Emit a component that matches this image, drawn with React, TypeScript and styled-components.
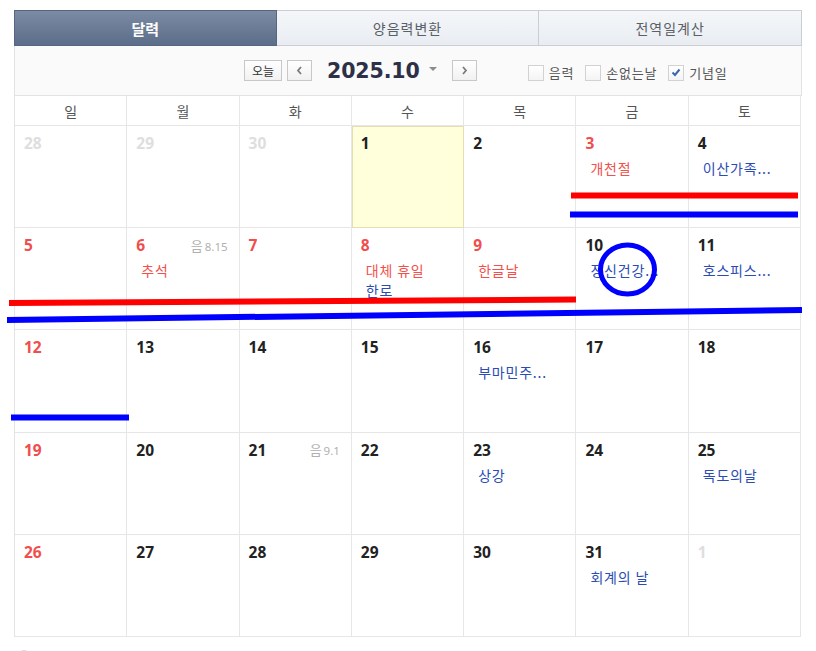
import React from "react";
import styled, { createGlobalStyle, css } from "styled-components";

const GlobalStyle = createGlobalStyle`
  html, body {
    margin: 0;
    padding: 0;
    background: #ffffff;
  }
  body {
    font-family: "Noto Sans CJK KR", "Noto Sans", sans-serif;
    color: #333;
  }
  * { box-sizing: border-box; }
`;

const Root = styled.div`
  position: relative;
  width: 816px;
  height: 651px;
  overflow: hidden;
`;

const Page = styled.div`
  width: 788px;
  margin: 10px 0 0 14px;
`;

/* ---------- tabs ---------- */

const Tabs = styled.div`
  display: grid;
  grid-template-columns: repeat(3, 1fr);
  height: 36px;
`;

const Tab = styled.div<{ $active?: boolean }>`
  display: flex;
  align-items: center;
  justify-content: center;
  font-size: 14px;
  letter-spacing: 1px;
  border: 1px solid #c9ced6;
  border-left-width: 0;
  background: linear-gradient(#f4f6f9, #e9edf2);
  color: #5b5f66;
  &:first-child { border-left-width: 1px; }
  ${(p) =>
    p.$active &&
    css`
      background: linear-gradient(#7b8ba4, #5c6d89);
      border-color: #56667f;
      color: #ffffff;
      font-weight: 700;
      font-size: 15px;
      letter-spacing: 0;
    `}
`;

/* ---------- toolbar ---------- */

const Toolbar = styled.div`
  display: flex;
  align-items: center;
  height: 50px;
  padding: 0 0 0 229px;
  background: #fafafa;
  border: 1px solid #e3e3e3;
  border-top: none;
`;

const NavButton = styled.button<{ $wide?: boolean }>`
  display: flex;
  align-items: center;
  justify-content: center;
  height: 21px;
  width: ${(p) => (p.$wide ? "38px" : "25px")};
  padding: 0;
  margin-right: 5px;
  border: 1px solid #c8c8c8;
  background: linear-gradient(#ffffff, #f1f1f1);
  font-family: "Noto Sans CJK KR", sans-serif;
  font-size: 12px;
  color: #333;
  line-height: 1;
`;

const MonthTitle = styled.div`
  margin-left: 10px;
  font-family: "DejaVu Sans", Verdana, sans-serif;
  font-weight: 700;
  font-size: 20.5px;
  color: #2d3047;
  letter-spacing: -0.1px;
`;

const Caret = styled.span`
  display: inline-block;
  margin: 0 15px 0 9px;
  width: 0;
  height: 0;
  border-left: 4px solid transparent;
  border-right: 4px solid transparent;
  border-top: 4px solid #8c8c8c;
  transform: translateY(-2px);
`;

const Options = styled.div`
  display: flex;
  align-items: center;
  margin-left: 46px;
  margin-top: 4px;
`;

const Option = styled.label`
  display: flex;
  align-items: center;
  margin-right: 11px;
  font-size: 13px;
  letter-spacing: 0.8px;
  color: #555;
`;

const Box = styled.span`
  display: flex;
  align-items: center;
  justify-content: center;
  width: 16px;
  height: 16px;
  margin-right: 5px;
  border: 1px solid #d2d2d2;
  background: linear-gradient(#ffffff, #f4f4f4);
`;

/* ---------- calendar grid ---------- */

const Grid = styled.div`
  display: grid;
  grid-template-columns: repeat(7, 1fr);
  grid-template-rows: 30px repeat(5, 102.2px);
  width: 787px;
  border-left: 1px solid #e3e3e3;
`;

const WeekdayCell = styled.div`
  display: flex;
  align-items: center;
  justify-content: center;
  font-size: 14px;
  color: #555;
  border-right: 1px solid #e6e6e6;
  border-bottom: 1px solid #e6e6e6;
`;

const DayCell = styled.div<{ $today?: boolean }>`
  padding: 7px 9px 0 9px;
  border-right: 1px solid #e6e6e6;
  border-bottom: 1px solid #e6e6e6;
  background: #ffffff;
  ${(p) =>
    p.$today &&
    css`
      background: #ffffdc;
      box-shadow: inset 1px 0 0 #e4e0b4, inset 0 1px 0 #e4e0b4;
      border-right-color: #e4e0b4;
      border-bottom-color: #e4e0b4;
    `}
`;

const DayHead = styled.div`
  display: flex;
  align-items: center;
  justify-content: space-between;
  height: 20px;
`;

type Tone = "sun" | "plain" | "muted";

const toneColor: Record<Tone, string> = {
  sun: "#f24d4d",
  plain: "#222222",
  muted: "#dedede",
};

const DayNum = styled.span<{ $tone: Tone }>`
  font-family: "Noto Sans", sans-serif;
  font-weight: 700;
  font-size: 15.5px;
  color: ${(p) => toneColor[p.$tone]};
`;

const Lunar = styled.span`
  display: flex;
  align-items: baseline;
  gap: 2px;
  margin-right: 2px;
  color: #b0b0b0;
  font-size: 13px;
  & > small {
    font-family: "Noto Sans", sans-serif;
    font-size: 11.5px;
  }
`;

const Events = styled.div`
  margin-top: 5px;
  padding-left: 5px;
`;

const EventLine = styled.div<{ $holiday?: boolean }>`
  height: 20px;
  line-height: 20px;
  font-size: 14px;
  letter-spacing: 0.8px;
  white-space: nowrap;
  color: ${(p) => (p.$holiday ? "#f2504d" : "#2a4cb3")};
`;

const Footer = styled.div`
  margin: 13px 0 0 3px;
  width: 14px;
  height: 14px;
  border-radius: 50%;
  border: 1px solid #d8d8d8;
`;

const Marks = styled.svg`
  position: absolute;
  left: 0;
  top: 0;
  pointer-events: none;
`;

/* ---------- data ---------- */

type Ev = { text: string; holiday?: boolean };
type Day = { n: number; tone: Tone; today?: boolean; lunar?: string; events?: Ev[] };

const d = (n: number, tone: Tone = "plain", extra: Partial<Day> = {}): Day => ({ n, tone, ...extra });

const weeks: Day[][] = [
  [d(28, "muted"), d(29, "muted"), d(30, "muted"), d(1, "plain", { today: true }), d(2),
    d(3, "sun", { events: [{ text: "개천절", holiday: true }] }),
    d(4, "plain", { events: [{ text: "이산가족..." }] })],
  [d(5, "sun"),
    d(6, "sun", { lunar: "8.15", events: [{ text: "추석", holiday: true }] }),
    d(7, "sun"),
    d(8, "sun", { events: [{ text: "대체 휴일", holiday: true }, { text: "한로" }] }),
    d(9, "sun", { events: [{ text: "한글날", holiday: true }] }),
    d(10, "plain", { events: [{ text: "정신건강..." }] }),
    d(11, "plain", { events: [{ text: "호스피스..." }] })],
  [d(12, "sun"), d(13), d(14), d(15),
    d(16, "plain", { events: [{ text: "부마민주..." }] }), d(17), d(18)],
  [d(19, "sun"), d(20), d(21, "plain", { lunar: "9.1" }), d(22),
    d(23, "plain", { events: [{ text: "상강" }] }), d(24),
    d(25, "plain", { events: [{ text: "독도의날" }] })],
  [d(26, "sun"), d(27), d(28), d(29), d(30),
    d(31, "plain", { events: [{ text: "회계의 날" }] }), d(1, "muted")],
];

const weekdays = ["일", "월", "화", "수", "목", "금", "토"];

const Chevron = ({ dir }: { dir: "left" | "right" }) => (
  <svg width="7" height="9" viewBox="0 0 7 9">
    <path
      d={dir === "left" ? "M5 1 L2 4.5 L5 8" : "M2 1 L5 4.5 L2 8"}
      fill="none"
      stroke="#7a7a7a"
      strokeWidth="1.8"
    />
  </svg>
);

const Check = () => (
  <svg width="10" height="9" viewBox="0 0 10 9">
    <path d="M1.5 4.5 L4 7 L8.5 1.5" fill="none" stroke="#3a66b0" strokeWidth="2" />
  </svg>
);

export default function App() {
  return (
    <Root>
      <GlobalStyle />
      <Page>
        <Tabs>
          <Tab $active>달력</Tab>
          <Tab>양음력변환</Tab>
          <Tab>전역일계산</Tab>
        </Tabs>

        <Toolbar>
          <NavButton $wide>오늘</NavButton>
          <NavButton>
            <Chevron dir="left" />
          </NavButton>
          <MonthTitle>2025.10</MonthTitle>
          <Caret />
          <NavButton>
            <Chevron dir="right" />
          </NavButton>
          <Options>
            <Option>
              <Box />
              음력
            </Option>
            <Option>
              <Box />
              손없는날
            </Option>
            <Option>
              <Box>
                <Check />
              </Box>
              기념일
            </Option>
          </Options>
        </Toolbar>

        <Grid>
          {weekdays.map((w) => (
            <WeekdayCell key={w}>{w}</WeekdayCell>
          ))}
          {weeks.flat().map((day, i) => (
            <DayCell key={i} $today={day.today}>
              <DayHead>
                <DayNum $tone={day.tone}>{day.n}</DayNum>
                {day.lunar && (
                  <Lunar>
                    음<small>{day.lunar}</small>
                  </Lunar>
                )}
              </DayHead>
              {day.events && (
                <Events>
                  {day.events.map((e) => (
                    <EventLine key={e.text} $holiday={e.holiday}>
                      {e.text}
                    </EventLine>
                  ))}
                </Events>
              )}
            </DayCell>
          ))}
        </Grid>
        <Footer />
      </Page>

      {/* hand-drawn highlight strokes over the calendar */}
      <Marks width="816" height="651" viewBox="0 0 816 651">
        <line x1="571" y1="195.5" x2="798" y2="195.5" stroke="#ff0000" strokeWidth="6" />
        <line x1="570" y1="214.5" x2="798" y2="214.5" stroke="#0000ff" strokeWidth="6" />
        <line x1="9" y1="303" x2="576" y2="299.5" stroke="#ff0000" strokeWidth="6" />
        <line x1="7" y1="320" x2="802" y2="310" stroke="#0000ff" strokeWidth="6" />
        <line x1="11" y1="417.5" x2="129" y2="417.5" stroke="#0000ff" strokeWidth="6" />
        <ellipse cx="627.5" cy="269.5" rx="27" ry="24.5" fill="none" stroke="#0000ff" strokeWidth="5" />
      </Marks>
    </Root>
  );
}
